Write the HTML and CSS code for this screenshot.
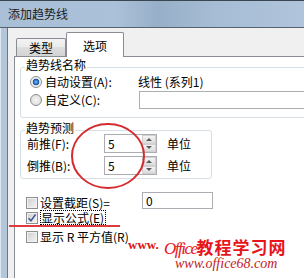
FILE: index.html
```html
<!DOCTYPE html>
<html>
<head>
<meta charset="utf-8">
<link rel="stylesheet" href="styles.css">
</head>
<body>
<div class="window">
  <div class="titlebar"><span class="title">添加趋势线</span></div>
  <div class="main">
    <div class="frame-left"></div>
    <div class="client">
      <div class="tabs">
        <div class="tab">类型</div>
        <div class="tab active">选项</div>
      </div>
      <div class="panel">
        <fieldset class="group group-name">
          <legend>趋势线名称</legend>
          <div class="name-grid">
            <label class="opt"><span class="radio checked"></span>自动设置(A):</label>
            <span class="auto-name">线性 (系列1)</span>
            <label class="opt"><span class="radio"></span>自定义(C):</label>
            <span class="textbox wide"></span>
          </div>
        </fieldset>
        <fieldset class="group group-fc">
          <legend>趋势预测</legend>
          <div class="fc-grid">
            <span class="fc-label">前推(F):</span>
            <span class="spin"><span class="val">5</span><span class="spin-btns"><span class="spin-btn"><span class="arr up"></span></span><span class="spin-btn"><span class="arr down"></span></span></span></span>
            <span>单位</span>
            <span class="fc-label">倒推(B):</span>
            <span class="spin"><span class="val">5</span><span class="spin-btns"><span class="spin-btn"><span class="arr up"></span></span><span class="spin-btn"><span class="arr down"></span></span></span></span>
            <span>单位</span>
          </div>
        </fieldset>
        <div class="checks">
          <div class="check-row"><span class="cb"></span><span class="lbl-intercept">设置截距(S)=</span><span class="textbox small">0</span></div>
          <div class="check-row r2"><span class="cb"><svg width="10" height="10" viewBox="0 0 10 10"><path d="M1.5 5.2 L4 7.8 L8.6 1.4" fill="none" stroke="#3d5a96" stroke-width="1.6"/></svg></span><span class="focus">显示公式(E)</span></div>
          <div class="check-row"><span class="cb"></span><span>显示 R 平方值(R)</span></div>
        </div>
      </div>
    </div>
  </div>
  <svg class="circle" width="304" height="278" viewBox="0 0 304 278"><ellipse cx="108" cy="156" rx="36" ry="32" fill="none" stroke="#d42b2e" stroke-width="2"/></svg>
  <div class="underline"></div>
  <div class="wm-top">www.</div>
  <div class="wm-logo"><span class="wm-office">Office</span><span class="wm-cn">教程学习网</span></div>
  <div class="wm-url">www.office68.com</div>
</div>
</body>
</html>
```
FILE: styles.css
```css
* { box-sizing: border-box; }
html, body { margin: 0; padding: 0; }
body {
  width: 304px;
  height: 278px;
  overflow: hidden;
  background: #fff;
  font-family: "Noto Sans CJK SC", "Noto Sans", sans-serif;
  font-size: 12px;
  color: #000;
}
.window {
  position: relative;
  width: 304px;
  height: 278px;
  display: flex;
  flex-direction: column;
  overflow: hidden;
}
.titlebar {
  height: 28px;
  flex: none;
  border-top: 1px solid #3b4650;
  border-bottom: 1px solid #56636f;
  background: linear-gradient(90deg, #a9bfd7 0, #abc1d9 38%, #98afc9 52%, #a6bcd4 70%, #b0c5dc 100%);
  display: flex;
  align-items: center;
  padding-left: 8px;
}
.title { line-height: 14px; color: #1a1a1a; }
.main { flex: 1; display: flex; min-height: 0; }
.frame-left {
  width: 8px;
  flex: none;
  background: linear-gradient(90deg, #dfe7f0 0 1px, #b4c6da 1px 7px, #6a7785 7px 8px);
}
.client {
  flex: 1;
  min-width: 0;
  background: #f0f0f0;
  padding: 4px 0 0 6px;
  display: flex;
  flex-direction: column;
}
.tabs {
  display: flex;
  align-items: flex-end;
  height: 24px;
  padding-left: 2px;
  flex: none;
}
.tab {
  width: 50px;
  height: 18px;
  border: 1px solid #898c95;
  border-bottom: none;
  border-radius: 2px 2px 0 0;
  background: linear-gradient(#f3f3f3, #ebebeb 45%, #dedede 50%, #d4d4d4);
  display: flex;
  align-items: center;
  justify-content: center;
  line-height: 14px;
  padding-top: 1px;
}
.tab.active {
  width: 58px;
  height: 25px;
  margin-bottom: -1px;
  background: #fff;
  position: relative;
  z-index: 1;
  padding-top: 2px;
}
.panel {
  flex: 1;
  background: #fff;
  border-top: 1px solid #898c95;
  border-left: 1px solid #898c95;
  padding: 2px 0 0 5px;
}
.group {
  margin: 0;
  border: 1px solid #d5dfe5;
  border-radius: 3px;
  padding: 0 0 0 4px;
  min-width: 0;
}
.group legend {
  padding: 0 1px 4px;
  margin: 0;
  line-height: 12px;
}
.group-name { width: 330px; padding-bottom: 8px; }
.name-grid {
  display: grid;
  grid-template-columns: 108px 1fr;
  grid-template-rows: 14px 18px;
  row-gap: 2px;
  margin-left: 5px;
  align-items: center;
}
.opt { display: flex; align-items: center; line-height: 14px; }
.auto-name { line-height: 14px; }
.radio {
  width: 12px;
  height: 12px;
  flex: none;
  border-radius: 50%;
  border: 1px solid #8f8f8f;
  background: radial-gradient(circle at 50% 50%, #f6f6f6 0, #dadada 6px);
  margin-right: 3px;
}
.radio.checked {
  background: radial-gradient(circle at 50% 50%, #7cc0f2 0, #2a78cf 2px, #1d4f97 3px, #e6e6e6 3.6px, #f6f6f6 5px);
}
.textbox {
  border: 1px solid #abadb3;
  background: #fff;
}
.textbox.wide { width: 200px; height: 18px; margin-left: 1px; }
.group-fc { width: 192px; margin-top: 4px; padding-bottom: 3px; }
.fc-grid {
  display: grid;
  grid-template-columns: 69px 53px auto;
  column-gap: 10px;
  grid-auto-rows: 19px;
  row-gap: 3px;
  align-items: center;
  margin-top: -4px;
  line-height: 14px;
}
.fc-label { padding-left: 2px; }
.spin {
  height: 19px;
  border: 1px solid #abadb3;
  display: flex;
}
.spin .val { flex: 1; padding-left: 3px; line-height: 17px; }
.spin-btns { width: 14px; display: flex; flex-direction: column; }
.spin-btn {
  flex: 1;
  background: linear-gradient(#f4f4f4, #dcdcdc);
  border: 1px solid #d0d0d0;
  display: flex;
  align-items: center;
  justify-content: center;
}
.arr { width: 0; height: 0; border-left: 3px solid transparent; border-right: 3px solid transparent; }
.arr.up { border-bottom: 3px solid #5a5a5a; }
.arr.down { border-top: 3px solid #5a5a5a; }
.checks {
  margin-top: 16px;
  padding-left: 6px;
  display: flex;
  flex-direction: column;
}
.check-row { display: flex; align-items: center; height: 15px; line-height: 13px; }
.check-row.r2 { margin-bottom: 4px; }
.cb {
  width: 12px;
  height: 12px;
  flex: none;
  border: 1px solid #8e8f8f;
  background: linear-gradient(135deg, #cdcdcd, #f6f6f6);
  box-shadow: inset 0 0 0 1px #f2f2f2;
  margin-right: 2px;
  display: flex;
  align-items: center;
  justify-content: center;
}
.lbl-intercept { width: 102px; }
.textbox.small {
  width: 71px;
  height: 17px;
  margin-top: -4px;
  padding-left: 3px;
  line-height: 15px;
}
.focus { border: 1px dotted #000; padding: 0 1px 0 0; line-height: 13px; }
.circle { position: absolute; left: 0; top: 0; pointer-events: none; }
.underline {
  position: absolute;
  left: 9px;
  top: 225px;
  width: 111px;
  height: 2px;
  background: #e03a3e;
}
.wm-top {
  position: absolute;
  left: 128px;
  top: 238px;
  font-family: "Liberation Serif", serif;
  font-weight: bold;
  font-size: 13px;
  line-height: 13px;
  color: #e01010;
}
.wm-logo {
  position: absolute;
  left: 164px;
  top: 238px;
  color: #e8141b;
  line-height: 17px;
  white-space: nowrap;
  text-shadow: 0 0 1px #fff;
}
.wm-office {
  font-family: "Liberation Serif", serif;
  font-style: italic;
  font-size: 17px;
  letter-spacing: -1.5px;
}
.wm-cn { font-weight: bold; font-size: 17px; letter-spacing: 1px; }
.wm-url {
  position: absolute;
  left: 175px;
  top: 257px;
  font-family: "Liberation Serif", serif;
  font-style: italic;
  font-size: 14px;
  line-height: 14px;
  color: #c41a1a;
}
```
